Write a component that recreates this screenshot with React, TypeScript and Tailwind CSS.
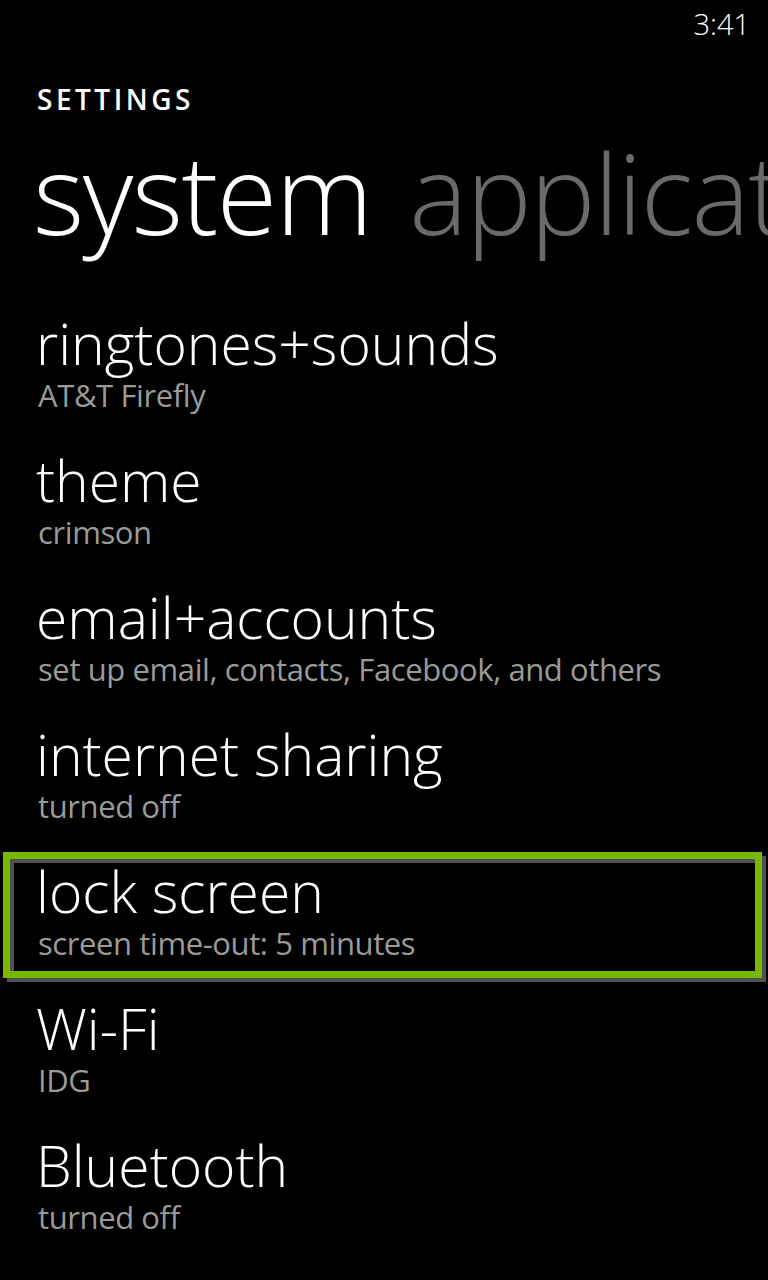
import React from "react";

const items = [
  { t: "ringtones+sounds", s: "AT&T Firefly" },
  { t: "theme", s: "crimson" },
  { t: "email+accounts", s: "set up email, contacts, Facebook, and others" },
  { t: "internet sharing", s: "turned off" },
  { t: "lock screen", s: "screen time-out: 5 minutes", hl: true },
  { t: "Wi-Fi", s: "IDG" },
  { t: "Bluetooth", s: "turned off" },
];

function RowText({ t, s }: { t: string; s: string }) {
  return (
    <>
      <div className="text-[57px] font-light leading-[62px] whitespace-nowrap">{t}</div>
      <div className="pl-[2px] text-[31px] leading-[42px] text-[#9a9a9a] tracking-[-0.4px] whitespace-nowrap">{s}</div>
    </>
  );
}

export default function App() {
  return (
    <div
      className="w-[768px] h-[1280px] bg-black text-white overflow-hidden flex flex-col"
      style={{ fontFamily: '"Open Sans", "Noto Sans", sans-serif' }}
    >
      <div className="flex justify-end pr-[18px] pt-[6px] text-[29px] font-light leading-[36px]">3:41</div>
      <div className="pl-[37px] mt-[41px] text-[28px] font-semibold leading-[32px] tracking-[3.5px]">SETTINGS</div>
      <div className="pl-[33px] mt-[17px] flex whitespace-nowrap text-[110px] font-light leading-[120px] tracking-[-1.5px]">
        <span>system</span>
        <span className="ml-[38px] text-[#6a6a6a]">applications</span>
      </div>
      <div className="mt-[60px] flex flex-col">
        {items.map((it) =>
          it.hl ? (
            <div key={it.t} className="h-[137px]">
              <div className="-mt-[8px] ml-[3px] mr-[6px] h-[126px] border-[7px] border-[#77b800] shadow-[4px_4px_0_#505050,inset_4px_4px_0_#505050] pl-[26px] pt-[1px] flex flex-col">
                <RowText t={it.t} s={it.s} />
              </div>
            </div>
          ) : (
            <div key={it.t} className="pl-[36px] flex flex-col h-[137px]">
              <RowText t={it.t} s={it.s} />
            </div>
          )
        )}
      </div>
    </div>
  );
}
